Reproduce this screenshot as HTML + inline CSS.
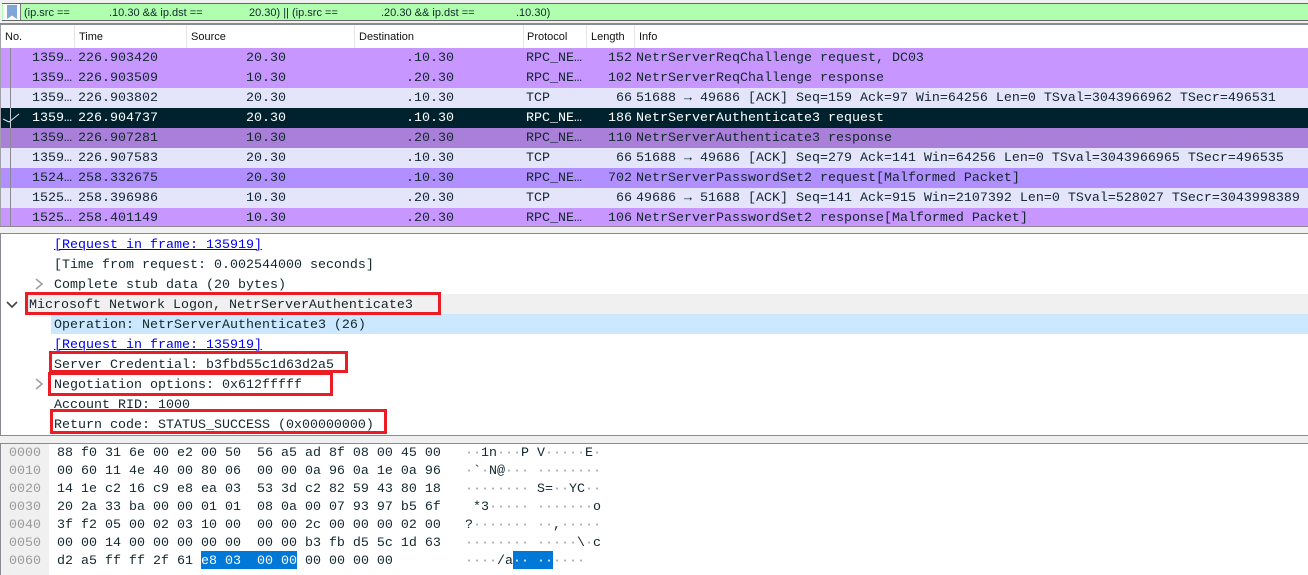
<!DOCTYPE html>
<html><head><meta charset="utf-8"><style>
html,body{margin:0;padding:0;width:1308px;height:575px;overflow:hidden;background:#fff}
#a{position:relative;width:1308px;height:575px;overflow:hidden;font-family:"Liberation Mono","DejaVu Sans Mono",monospace;font-size:13.33px;color:#12272e}
#a div{position:absolute;white-space:pre}
.b{left:0;width:1308px}
.r{left:0;width:1308px;height:20px;line-height:22px;overflow:hidden}
.r span{position:absolute;top:0;white-space:pre}
.n{left:32px}.ti{left:78px}.s{right:1022px}.d{right:854px}.p{left:526px}.l{right:676px}.i{left:636px}
.v{background:#c797ff}.w{background:#e4e4fb}.x{background:#00222e;color:#fff}.y{background:#a97fd9}.z{background:#b18fff}
.h{top:27px;height:21px;font:11px/21px "Liberation Sans",sans-serif;color:#111}
.sep{top:25px;width:1px;height:23px;background:#e5e5e5}
.f{top:3px;height:18px;font:11px/20px "Liberation Sans",sans-serif;color:#12272e}
.dl{height:20px;line-height:24px}
.rb{border:3px solid #ec1c24;box-sizing:border-box}
.hx{left:57px;height:18px;line-height:22px}
.of{left:9px;height:18px;line-height:22px;color:#9a9a9a}
.as{left:465px;height:18px;line-height:22px}
.as i{font-style:normal;color:#9aa0a3}
</style></head><body><div id="a">
<div class="b" style="top:0;height:575px;background:#f0f0f0"></div>
<div style="left:2px;top:3px;width:1306px;height:18px;background:#afffaf;border-top:1px solid #666;border-bottom:1px solid #666;box-sizing:border-box"></div>
<div style="left:3px;top:4px;width:18px;height:16px;background:#fafafa;border-right:1px solid #777;box-sizing:border-box"></div>
<svg style="position:absolute;left:7px;top:5px" width="10" height="14"><path d="M0 0H10V14L5 10.500 0 14Z" fill="#7ea6d8"/></svg>
<div class="f" style="left:24px">(ip.src ==</div><div class="f" style="left:109px">.10.30 &amp;&amp; ip.dst ==</div><div class="f" style="left:249px">20.30) || (ip.src ==</div><div class="f" style="left:381px">.20.30 &amp;&amp; ip.dst ==</div><div class="f" style="left:516px">.10.30)</div>
<div class="b" style="top:23px;height:2px;background:#8a8a92"></div>
<div class="b" style="top:25px;height:201px;background:#fff"></div>
<div class="h" style="left:5px">No.</div><div class="h" style="left:79px">Time</div><div class="h" style="left:191px">Source</div><div class="h" style="left:359px">Destination</div><div class="h" style="left:527px">Protocol</div><div class="h" style="left:591px">Length</div><div class="h" style="left:639px">Info</div>
<div class="sep" style="left:74px"></div><div class="sep" style="left:186px"></div><div class="sep" style="left:354px"></div><div class="sep" style="left:523px"></div><div class="sep" style="left:586px"></div><div class="sep" style="left:634px"></div>

<div class="r v" style="top:48px"><span class="n">1359…</span><span class="ti">226.903420</span><span class="s">20.30</span><span class="d">.10.30</span><span class="p">RPC_NE…</span><span class="l">152</span><span class="i">NetrServerReqChallenge request, DC03</span></div>
<div class="r v" style="top:68px"><span class="n">1359…</span><span class="ti">226.903509</span><span class="s">10.30</span><span class="d">.20.30</span><span class="p">RPC_NE…</span><span class="l">102</span><span class="i">NetrServerReqChallenge response</span></div>
<div class="r w" style="top:88px"><span class="n">1359…</span><span class="ti">226.903802</span><span class="s">20.30</span><span class="d">.10.30</span><span class="p">TCP</span><span class="l">66</span><span class="i">51688 → 49686 [ACK] Seq=159 Ack=97 Win=64256 Len=0 TSval=3043966962 TSecr=496531</span></div>
<div class="r x" style="top:108px"><span class="n">1359…</span><span class="ti">226.904737</span><span class="s">20.30</span><span class="d">.10.30</span><span class="p">RPC_NE…</span><span class="l">186</span><span class="i">NetrServerAuthenticate3 request</span></div>
<div class="r y" style="top:128px"><span class="n">1359…</span><span class="ti">226.907281</span><span class="s">10.30</span><span class="d">.20.30</span><span class="p">RPC_NE…</span><span class="l">110</span><span class="i">NetrServerAuthenticate3 response</span></div>
<div class="r w" style="top:148px"><span class="n">1359…</span><span class="ti">226.907583</span><span class="s">20.30</span><span class="d">.10.30</span><span class="p">TCP</span><span class="l">66</span><span class="i">51688 → 49686 [ACK] Seq=279 Ack=141 Win=64256 Len=0 TSval=3043966965 TSecr=496535</span></div>
<div class="r z" style="top:168px"><span class="n">1524…</span><span class="ti">258.332675</span><span class="s">20.30</span><span class="d">.10.30</span><span class="p">RPC_NE…</span><span class="l">702</span><span class="i">NetrServerPasswordSet2 request[Malformed Packet]</span></div>
<div class="r w" style="top:188px"><span class="n">1525…</span><span class="ti">258.396986</span><span class="s">10.30</span><span class="d">.20.30</span><span class="p">TCP</span><span class="l">66</span><span class="i">49686 → 51688 [ACK] Seq=141 Ack=915 Win=2107392 Len=0 TSval=528027 TSecr=3043998389</span></div>
<div class="r v" style="top:208px;height:18px"><span class="n">1525…</span><span class="ti">258.401149</span><span class="s">10.30</span><span class="d">.20.30</span><span class="p">RPC_NE…</span><span class="l">106</span><span class="i">NetrServerPasswordSet2 response[Malformed Packet]</span></div>
<div style="left:10px;top:48px;width:1px;height:178px;background:#8a8a92"></div>
<svg style="position:absolute;left:0;top:108px" width="22" height="20"><path d="M10.500 0V20" stroke="#c8d0d4" stroke-width="1"/><path d="M3 11L9 14 19 6" fill="none" stroke="#dfe5e8" stroke-width="1"/></svg>
<div class="b" style="top:226px;height:1px;background:#8a8a92"></div>
<div style="left:0;top:25px;width:1px;height:201px;background:#a0a0a8"></div>

<div class="b" style="top:233px;height:203px;background:#fff;border-top:1px solid #8a8a92;border-bottom:1px solid #8a8a92;border-left:1px solid #8a8a92;box-sizing:border-box"></div>
<div style="left:25px;top:294px;width:1283px;height:20px;background:#f0f0f0"></div>
<div style="left:51px;top:314px;width:1257px;height:20px;background:#cce8ff"></div>
<div class="dl" style="left:54px;top:234px;color:#0000ee"><u>[Request in frame: 135919]</u></div>
<div class="dl" style="left:54px;top:254px">[Time from request: 0.002544000 seconds]</div>
<div class="dl" style="left:54px;top:274px">Complete stub data (20 bytes)</div>
<div class="dl" style="left:29px;top:294px">Microsoft Network Logon, NetrServerAuthenticate3</div>
<div class="dl" style="left:54px;top:314px">Operation: NetrServerAuthenticate3 (26)</div>
<div class="dl" style="left:54px;top:334px;color:#0000ee"><u>[Request in frame: 135919]</u></div>
<div class="dl" style="left:54px;top:354px">Server Credential: b3fbd55c1d63d2a5</div>
<div class="dl" style="left:54px;top:374px">Negotiation options: 0x612fffff</div>
<div class="dl" style="left:54px;top:394px">Account RID: 1000</div>
<div class="dl" style="left:54px;top:414px">Return code: STATUS_SUCCESS (0x00000000)</div>
<svg style="position:absolute;left:34px;top:278px" width="10" height="12"><path d="M2 1L8 6 2 11" fill="none" stroke="#a0a0a0" stroke-width="1.600"/></svg>
<svg style="position:absolute;left:34px;top:378px" width="10" height="12"><path d="M2 1L8 6 2 11" fill="none" stroke="#a0a0a0" stroke-width="1.600"/></svg>
<svg style="position:absolute;left:5px;top:300px" width="14" height="10"><path d="M2 2L7 7 12 2" fill="none" stroke="#444" stroke-width="1.600"/></svg>
<div class="rb" style="left:25px;top:292px;width:416px;height:23px"></div>
<div class="rb" style="left:49px;top:351px;width:299px;height:22px"></div>
<div class="rb" style="left:48px;top:372px;width:285px;height:24px"></div>
<div class="rb" style="left:50px;top:409px;width:337px;height:25px"></div>

<div class="b" style="top:443px;height:132px;background:#fff;border-top:1px solid #8a8a92;border-left:1px solid #8a8a92;box-sizing:border-box"></div>
<div style="left:1px;top:444px;width:48px;height:131px;background:#f0f0f0"></div>
<div style="left:201px;top:551px;width:96px;height:18px;background:#0078d7"></div>
<div style="left:513px;top:551px;width:40px;height:18px;background:#0078d7"></div>
<div class="of" style="top:443px">0000</div><div class="hx" style="top:443px">88 f0 31 6e 00 e2 00 50  56 a5 ad 8f 08 00 45 00</div><div class="as" style="top:443px"><i>··</i>1n<i>···</i>P V<i>·····</i>E<i>·</i></div>
<div class="of" style="top:461px">0010</div><div class="hx" style="top:461px">00 60 11 4e 40 00 80 06  00 00 0a 96 0a 1e 0a 96</div><div class="as" style="top:461px"><i>·</i>`<i>·</i>N@<i>···</i> <i>········</i></div>
<div class="of" style="top:479px">0020</div><div class="hx" style="top:479px">14 1e c2 16 c9 e8 ea 03  53 3d c2 82 59 43 80 18</div><div class="as" style="top:479px"><i>········</i> S=<i>··</i>YC<i>··</i></div>
<div class="of" style="top:497px">0030</div><div class="hx" style="top:497px">20 2a 33 ba 00 00 01 01  08 0a 00 07 93 97 b5 6f</div><div class="as" style="top:497px"> *3<i>·····</i> <i>·······</i>o</div>
<div class="of" style="top:515px">0040</div><div class="hx" style="top:515px">3f f2 05 00 02 03 10 00  00 00 2c 00 00 00 02 00</div><div class="as" style="top:515px">?<i>·······</i> <i>··</i>,<i>·····</i></div>
<div class="of" style="top:533px">0050</div><div class="hx" style="top:533px">00 00 14 00 00 00 00 00  00 00 b3 fb d5 5c 1d 63</div><div class="as" style="top:533px"><i>········</i> <i>·····</i>\<i>·</i>c</div>
<div class="of" style="top:551px">0060</div><div class="hx" style="top:551px">d2 a5 ff ff 2f 61 <span style="color:#fff">e8 03  00 00</span> 00 00 00 00</div><div class="as" style="top:551px"><i>····</i>/a<span style="color:#fff">·· ··</span><i>····</i></div>
</div></body></html>
